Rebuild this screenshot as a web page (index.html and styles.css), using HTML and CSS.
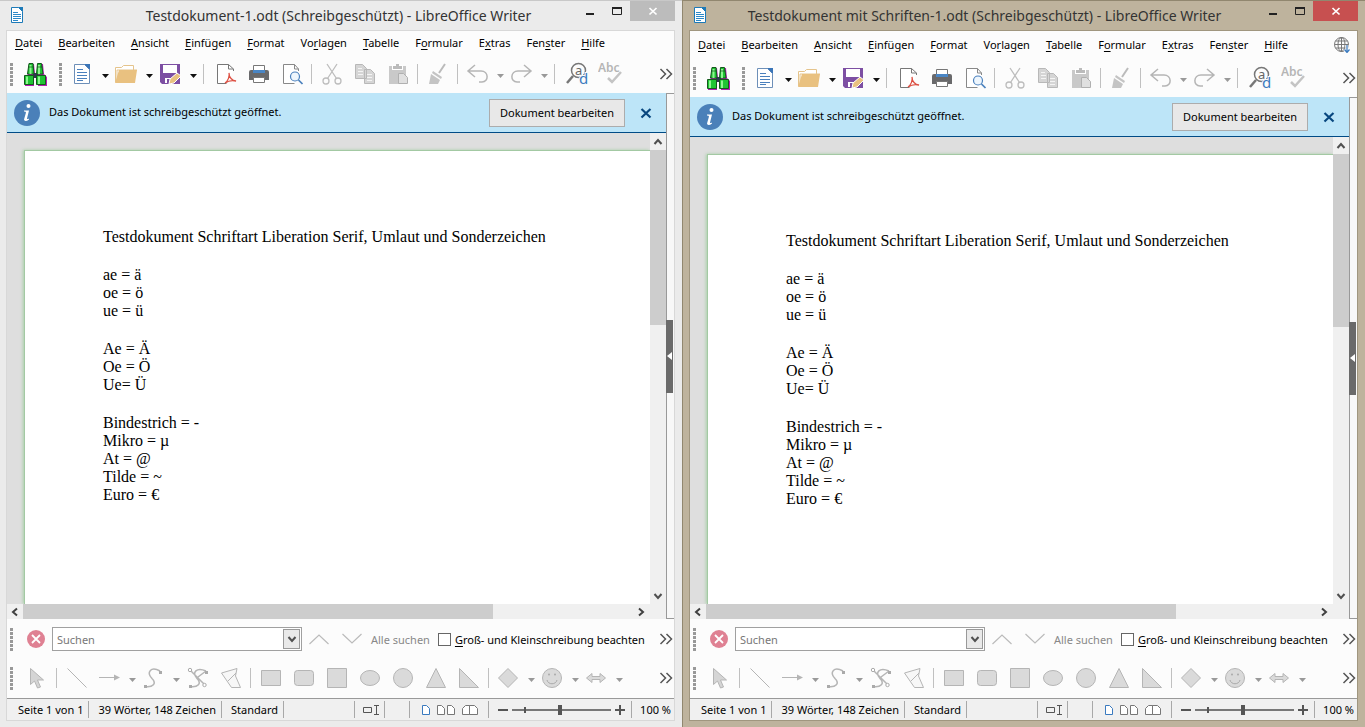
FILE: index.html
```html
<!doctype html>
<html lang="de">
<head>
<meta charset="utf-8">
<title>LibreOffice Writer</title>
<link rel="stylesheet" href="styles.css">
<script src="windows.js" defer></script>
</head>

<body>
<svg class="sprite">
	<symbol id="i-writer" viewBox="0 0 12 16"><path d="M.5.5h7l4 4v11H.5z" fill="#fff" stroke="#1d7ab8"/><path d="M7 0h5v5z" fill="#1d7ab8"/><path d="M2 5.500h5M2 7.500h8M2 9.500h8M2 11.500h8M2 13.500h5" stroke="#2b88c8"/></symbol>
	<symbol id="i-min" viewBox="0 0 12 12"><path d="M2 9h8" stroke="#222" stroke-width="2"/></symbol>
	<symbol id="i-max" viewBox="0 0 12 12"><path d="M1.500 3v6.500h9V3" fill="none" stroke="#222"/><path d="M1 3h10" stroke="#222" stroke-width="2"/></symbol>
	<symbol id="i-close" viewBox="0 0 12 12"><path d="M2.500 3l7 6.500M9.500 3l-7 6.500" stroke="#fff" stroke-width="1.700"/></symbol>
	<symbol id="i-globe" viewBox="0 0 16 16"><g fill="none" stroke="#777"><circle cx="7.500" cy="7.500" r="7"/><ellipse cx="7.500" cy="7.500" rx="3.500" ry="7"/><path d="M7.500.5v14M.5 7.500h14M1.500 4h12M1.500 11h12"/></g><path d="M13 8v7M10.500 12.500l2.500 3 2.500-3" fill="none" stroke="#fafafa" stroke-width="3"/><path d="M13 8v7M10.500 12.500l2.500 3 2.500-3" fill="none" stroke="#3a7abf" stroke-width="1.200"/></symbol>
	<symbol id="i-find" viewBox="0 0 24 24"><path d="M6 2h5l1 10h2l1-10h5l1 10 3 3v9h-9v-8h-4v8H2v-9l3-3z" fill="#b41eb4"/><path d="M10 11h5v5h-5z" fill="#335"/><path d="M4.500 12L6 1.500h4l1 10.500zM13.500 12l1-10.500h4L20 12zM1.500 13.500h9v9h-9zM13.500 13.500h9v9h-9z" fill="#1fc433" stroke="#14581c"/><path d="M7.500 3v9M4 14.500v7.500M16 3v9M16 14.500v7.500" stroke="#8df58f" stroke-width="2"/><path d="M5 5h5.500M14 5h5.500" stroke="#14581c" stroke-width=".7"/></symbol>
	<symbol id="i-new" viewBox="0 0 24 24"><path d="M4.500 2.500h10l5 5v14h-15z" fill="#fff" stroke="#6d8fb8"/><path d="M14 2h6v6z" fill="#3a75b8"/><path d="M7 7.500h6M7 10.500h10M7 13.500h10M7 16.500h10M7 18.500h6" stroke="#4a80bd"/></symbol>
	<symbol id="i-open" viewBox="0 0 24 24"><path d="M1.500 20V5.500h6l2-2h10V8M3 20V8h20" fill="#fff" stroke="#e5c48c"/><path d="M5 8h18l-2 13H1z" fill="#e9c180"/></symbol>
	<symbol id="i-save" viewBox="0 0 24 24"><path d="M2 2h20v20H4l-2-2z" fill="#7d4fa3"/><path d="M5 3h14v8H5zM7 16h8v5H7z" fill="#fff"/><path d="M9 17h3v4H9z" fill="#7d4fa3"/><path d="M11 22l1-5 7-6 4 3-7 7z" fill="#e9c180" stroke="#fff"/></symbol>
	<symbol id="i-pdf" viewBox="0 0 24 24"><path d="M19.500 9V7l-5-4.500h-11v19h9" fill="#fff" stroke="#777"/><path d="M14.500 2.500V7h5" fill="none" stroke="#777"/><path d="M11 21c3-2 5-7 4-10 0 4 3 8 7 8-4-1-8 0-11 2z" fill="none" stroke="#dd5144" stroke-width="1.300"/></symbol>
	<symbol id="i-print" viewBox="0 0 24 24"><path d="M2 10q0-2 2-2h16q2 0 2 2v8H2z" fill="#69696b"/><path d="M6.500 9V3.500h11V9" fill="#fff" stroke="#777"/><path d="M6 8h12v3H6z" fill="#4a86c5"/><path d="M6.500 15.500h11v5h-11z" fill="#fff" stroke="#777"/></symbol>
	<symbol id="i-preview" viewBox="0 0 24 24"><path d="M18.500 9V7l-4-4.500h-11v19h11M14.500 2.500V7h4" fill="#fff" stroke="#888"/><circle cx="15" cy="14.500" r="4.500" fill="#eef6fd" stroke="#4a80bd" stroke-width="1.200"/><path d="M18.500 18l4 4" stroke="#4a80bd" stroke-width="1.700"/></symbol>
	<symbol id="i-cut" viewBox="0 0 24 24"><g fill="none" stroke="#bdbdbd" stroke-width="1.300"><circle cx="6" cy="19" r="3"/><circle cx="18" cy="19" r="3"/><path d="M7.500 16.500L17 2M16.500 16.500L7 2"/></g></symbol>
	<symbol id="i-copy" viewBox="0 0 24 24"><path d="M2.500 2.500h7l4 4v10h-11zM11.500 7.500h6l4 4v10h-10z" fill="#d5d5d5" stroke="#b8b8b8"/><path d="M5 6.500h4M5 9.500h5M5 12.500h5M14 12.500h5M14 15.500h5M14 18.500h5" stroke="#f4f4f4"/></symbol>
	<symbol id="i-paste" viewBox="0 0 24 24"><path d="M3 4h17v18H3z" fill="#c9c9c9"/><path d="M6 3h11v5H6z" fill="#fff"/><path d="M7 4h3V2h3v2h3v3H7z" fill="#bbb"/><path d="M12.500 11.500h5l4 4v6h-9z" fill="#e0e0e0" stroke="#b0b0b0"/></symbol>
	<symbol id="i-brush" viewBox="0 0 24 24"><path d="M19 2l-6 9" stroke="#bbb" stroke-width="2"/><path d="M7 9l9 6-1 2-9-6zM5 12l9 6-2 4H3z" fill="#c4c4c4"/></symbol>
	<symbol id="i-undo" viewBox="0 0 24 24"><path d="M10 3L3 9l7 6M3 9h13c8 0 8 11 1 11h-3" fill="none" stroke="#b5b5b5" stroke-width="1.500"/></symbol>
	<symbol id="i-redo" viewBox="0 0 24 24"><path d="M15 3l7 6-7 6M22 9H9C1 9 1 20 8 20h3" fill="none" stroke="#b5b5b5" stroke-width="1.500"/></symbol>
	<symbol id="i-replace" viewBox="0 0 24 24"><circle cx="13.500" cy="8.500" r="7" fill="none" stroke="#777" stroke-width="1.500"/><path d="M8 14l-6 7" stroke="#777" stroke-width="2.500"/><text x="10" y="13" font-size="13" fill="#666">a</text><text x="14" y="22" font-size="15" fill="#3a7abf" stroke="#fafafa" stroke-width="2" paint-order="stroke">d</text></symbol>
	<symbol id="i-spell" viewBox="0 0 24 24"><text x="0" y="10" font-size="12" font-weight="600" fill="#b5b5b5">Abc</text><path d="M10 16l4 4 9-10" fill="none" stroke="#c4c4c4" stroke-width="2.500"/></symbol>
	<symbol id="i-more" viewBox="0 0 14 14"><path d="M1.500 2l5 5-5 5M7.500 2l5 5-5 5" fill="none" stroke="#555" stroke-width="1.500"/></symbol>
	<symbol id="i-drop" viewBox="0 0 7 4"><path d="M0 0h7L3.500 4z" fill="currentColor"/></symbol>
	<symbol id="i-info" viewBox="0 0 26 26"><circle cx="13" cy="13" r="13" fill="#4a80b9"/><circle cx="14.500" cy="6" r="2" fill="#fff"/><path d="M10 10.500h5l-2 8q0 1 2 0v1q-4 3-5 0l2-7q0-1-2-1z" fill="#fff"/></symbol>
	<symbol id="i-x" viewBox="0 0 12 12"><path d="M1.500 2l9 8.500M10.500 2l-9 8.500" stroke="#08477f" stroke-width="2.200"/></symbol>
	<symbol id="i-up" viewBox="0 0 16 16"><path d="M4.500 10L8 6l3.500 4" fill="none" stroke="#505050" stroke-width="2"/></symbol>
	<symbol id="i-down" viewBox="0 0 16 16"><path d="M4.500 6L8 10l3.500-4" fill="none" stroke="#505050" stroke-width="2"/></symbol>
	<symbol id="i-left" viewBox="0 0 16 16"><path d="M10 4.500L6 8l4 3.500" fill="none" stroke="#404040" stroke-width="2"/></symbol>
	<symbol id="i-right" viewBox="0 0 16 16"><path d="M6 4.500L10 8l-4 3.500" fill="none" stroke="#404040" stroke-width="2"/></symbol>
	<symbol id="i-stop" viewBox="0 0 18 18"><circle cx="9" cy="9" r="9" fill="#df8193"/><path d="M5 5l8 8M13 5l-8 8" stroke="#fff" stroke-width="1.800"/></symbol>
	<symbol id="i-prev" viewBox="0 0 24 24"><path d="M2.500 17l9.500-9 9.500 9" fill="none" stroke="#bbb" stroke-width="1.200"/></symbol>
	<symbol id="i-next" viewBox="0 0 24 24"><path d="M2.500 7l9.500 9 9.500-9" fill="none" stroke="#bbb" stroke-width="1.200"/></symbol>
	<symbol id="i-pointer" viewBox="0 0 24 24"><path d="M5.500 2.500v16l4-3.500 3 7 3-1-3-7h6z" fill="#d5d5d5" stroke="#b5b5b5"/></symbol>
	<symbol id="i-line" viewBox="0 0 24 24"><path d="M2.500 2.500l19 19" stroke="#b5b5b5"/></symbol>
	<symbol id="i-arrow" viewBox="0 0 24 24"><path d="M2 11.500h17" stroke="#b5b5b5"/><path d="M17 8.500l6 3-6 3z" fill="#b5b5b5"/></symbol>
	<symbol id="i-curve" viewBox="0 0 24 24"><path d="M4 20.500c8 1 12-3 7-8C5 6 10 0 19 5" fill="none" stroke="#b5b5b5" stroke-width="1.500"/><path d="M3 19h3v3H3zM18 5h3v3h-3z" fill="#aaa"/></symbol>
	<symbol id="i-points" viewBox="0 0 24 24"><path d="M4 20.500c8 1 12-3 7-8C5 6 11 1 20 5M5 5l13 13M12 11l8-6" fill="none" stroke="#b5b5b5" stroke-width="1.500"/><circle cx="4" cy="4" r="1.700" fill="#fff" stroke="#aaa"/><circle cx="18.500" cy="19" r="1.700" fill="#fff" stroke="#aaa"/><path d="M3 19h3v3H3zM19 5h3v3h-3z" fill="#aaa"/></symbol>
	<symbol id="i-polygon" viewBox="0 0 24 24"><path d="M2.500 7L18 2.500 16.500 10l5 11.500h-9z" fill="#f7f7f7" stroke="#b5b5b5"/><path d="M9 15l8-8" stroke="#b5b5b5"/></symbol>
	<symbol id="i-rect" viewBox="0 0 24 24"><path d="M2.500 4.500h19v15h-19z" fill="#dadada" stroke="#b5b5b5"/></symbol>
	<symbol id="i-round" viewBox="0 0 24 24"><rect x="2.500" y="4.500" width="19" height="15" rx="3" fill="#dadada" stroke="#b5b5b5"/></symbol>
	<symbol id="i-square" viewBox="0 0 24 24"><path d="M2.500 2.500h19v19h-19z" fill="#dadada" stroke="#b5b5b5"/></symbol>
	<symbol id="i-ellipse" viewBox="0 0 24 24"><ellipse cx="12" cy="12" rx="9.500" ry="7.500" fill="#dadada" stroke="#b5b5b5"/></symbol>
	<symbol id="i-circle" viewBox="0 0 24 24"><circle cx="12" cy="12" r="9.500" fill="#dadada" stroke="#b5b5b5"/></symbol>
	<symbol id="i-triangle" viewBox="0 0 24 24"><path d="M12 2.500l9.500 19h-19z" fill="#dadada" stroke="#b5b5b5"/></symbol>
	<symbol id="i-rtriangle" viewBox="0 0 24 24"><path d="M2.500 2.500l19 19h-19z" fill="#dadada" stroke="#b5b5b5"/></symbol>
	<symbol id="i-diamond" viewBox="0 0 24 24"><path d="M12 2.500l9.500 9.500-9.500 9.500L2.500 12z" fill="#dadada" stroke="#b5b5b5"/></symbol>
	<symbol id="i-smiley" viewBox="0 0 24 24"><circle cx="12" cy="12" r="9.500" fill="#dadada" stroke="#b5b5b5"/><path d="M7 14c1 5 9 5 10 0" fill="none" stroke="#aaa"/><circle cx="9" cy="8.500" r="1" fill="#aaa"/><circle cx="15" cy="8.500" r="1" fill="#aaa"/></symbol>
	<symbol id="i-double" viewBox="0 0 24 24"><path d="M2.500 12L8 7.500v3h8v-3l5.500 4.500-5.500 4.500v-3H8v3z" fill="#dadada" stroke="#b5b5b5"/></symbol>
	<symbol id="i-select" viewBox="0 0 18 12"><path d="M1.500 3.500h8v5h-8zM12 1.500h5M12 10.500h5M14.500 1.500v9" fill="none" stroke="#555"/></symbol>
	<symbol id="i-page1" viewBox="0 0 10 12"><path d="M1.500 1.500h4l3 3v6h-7z" fill="#fff" stroke="#3a7abf"/></symbol>
	<symbol id="i-page2" viewBox="0 0 20 12"><path d="M1.500 1.500h4l3 3v6h-7zM11.500 1.500h4l3 3v6h-7z" fill="#fff" stroke="#777"/></symbol>
	<symbol id="i-book" viewBox="0 0 18 12"><path d="M1.500 10.500v-6l3-3h4v9zM8.500 10.500v-9h5l3 3v6z" fill="#fff" stroke="#777"/></symbol>
</svg>

<section class="window">
	<header class="titlebar">
		<svg class="app"><use href="#i-writer"/></svg>
		<h1 class="title">Testdokument-1.odt (Schreibgeschützt) - LibreOffice Writer</h1>
		<button class="win" aria-label="Minimieren"><svg><use href="#i-min"/></svg></button>
		<button class="win" aria-label="Maximieren"><svg><use href="#i-max"/></svg></button>
		<button class="win close" aria-label="Schließen"><svg><use href="#i-close"/></svg></button>
	</header>
	<div class="frame"></div>
</section>

<section class="window active">
	<header class="titlebar">
		<svg class="app"><use href="#i-writer"/></svg>
		<h1 class="title">Testdokument mit Schriften-1.odt (Schreibgeschützt) - LibreOffice Writer</h1>
		<button class="win" aria-label="Minimieren"><svg><use href="#i-min"/></svg></button>
		<button class="win" aria-label="Maximieren"><svg><use href="#i-max"/></svg></button>
		<button class="win close" aria-label="Schließen"><svg><use href="#i-close"/></svg></button>
	</header>
	<div class="frame"></div>
</section>

<template id="writer">
	<nav class="menubar">
		<button><u>D</u>atei</button>
		<button><u>B</u>earbeiten</button>
		<button><u>A</u>nsicht</button>
		<button><u>E</u>infügen</button>
		<button><u>F</u>ormat</button>
		<button>Vo<u>r</u>lagen</button>
		<button><u>T</u>abelle</button>
		<button>F<u>o</u>rmular</button>
		<button>E<u>x</u>tras</button>
		<button>Fen<u>s</u>ter</button>
		<button><u>H</u>ilfe</button>
		<button class="update" aria-label="Aktualisierung"><svg><use href="#i-globe"/></svg></button>
	</nav>
	<div class="toolbar" data-tools="grip find grip new* open* save* | pdf print preview | cut copy paste | brush | undo*- redo*- | replace spell more"></div>
	<div class="main">
		<div class="view">
			<div class="infobar">
				<svg class="info"><use href="#i-info"/></svg>
				<p class="message">Das Dokument ist schreibgeschützt geöffnet.</p>
				<button class="edit">Dokument bearbeiten</button>
				<button class="dismiss" aria-label="Schließen"><svg><use href="#i-x"/></svg></button>
			</div>
			<div class="doc">
				<div class="desk">
					<article class="page">
						<p>Testdokument Schriftart Liberation Serif, Umlaut und Sonderzeichen</p>
						<p>ae = ä<br>oe = ö<br>ue = ü</p>
						<p>Ae = Ä<br>Oe = Ö<br>Ue= Ü</p>
						<p>Bindestrich = -<br>Mikro = µ<br>At = @<br>Tilde = ~<br>Euro = €</p>
					</article>
				</div>
				<div class="vscroll">
					<button aria-label="Nach oben"><svg><use href="#i-up"/></svg></button>
					<div class="track"><div class="thumb"></div></div>
					<button aria-label="Nach unten"><svg><use href="#i-down"/></svg></button>
				</div>
			</div>
			<div class="hscroll">
				<button aria-label="Nach links"><svg><use href="#i-left"/></svg></button>
				<div class="track"><div class="thumb"></div></div>
				<button aria-label="Nach rechts"><svg><use href="#i-right"/></svg></button>
			</div>
		</div>
		<aside class="sidebar"><button class="handle" aria-label="Seitenleiste"></button></aside>
	</div>
	<div class="findbar">
		<span class="grip"></span>
		<button class="stop" aria-label="Suchleiste schließen"><svg><use href="#i-stop"/></svg></button>
		<div class="combo">
			<input type="text" placeholder="Suchen" aria-label="Suchen">
			<button aria-label="Verlauf"><svg><use href="#i-down"/></svg></button>
		</div>
		<button class="tool" aria-label="Rückwärts suchen"><svg><use href="#i-prev"/></svg></button>
		<button class="tool" aria-label="Vorwärts suchen"><svg><use href="#i-next"/></svg></button>
		<button class="all" disabled>Alle suchen</button>
		<label class="check"><input type="checkbox"><span><u>G</u>roß- und Kleinschreibung beachten</span></label>
		<button class="more" aria-label="Mehr"><svg><use href="#i-more"/></svg></button>
	</div>
	<div class="toolbar shapes" data-tools="grip pointer | line arrow*- curve*- points polygon | rect round square ellipse circle triangle rtriangle | diamond*- smiley*- double*- more"></div>
	<footer class="status">
		<span>Seite 1 von 1</span>
		<span>39 Wörter, 148 Zeichen</span>
		<span>Standard</span>
		<span class="fill"></span>
		<span class="mode"><svg><use href="#i-select"/></svg></span>
		<span class="blank"></span>
		<span class="layouts">
			<svg class="one"><use href="#i-page1"/></svg>
			<svg class="two"><use href="#i-page2"/></svg>
			<svg class="book"><use href="#i-book"/></svg>
		</span>
		<span class="zoom">
			<button class="minus" aria-label="Verkleinern"></button>
			<input type="range" min="0" max="100" value="48" aria-label="Maßstab">
			<button class="minus plus" aria-label="Vergrößern"></button>
		</span>
		<span class="percent">100 %</span>
	</footer>
</template>
</body>
</html>
```

FILE: styles.css
```css
*{margin:0; padding:0; box-sizing:border-box;}
body{display:flex; gap:1px; height:100vh; overflow:hidden; background:#91876f; font:11px "Noto Sans","Open Sans",sans-serif; color:#000;}
button,input{font:inherit; color:inherit; background:none; border:0;}
svg{display:block; flex:none;}
.sprite{display:none;}

/* window */
.window{flex:1; min-width:0; display:flex; flex-direction:column; padding:0 7px 6px 6px; background:#ebebeb; border-top:1px solid #c8c8c8;}
.titlebar{display:flex; height:29px; flex:none;}
.app{width:12px; height:16px; margin:6px 4px 0 5px;}
.title{flex:1; padding-left:74px; font-size:14px; font-weight:400; line-height:29px; text-align:center; white-space:nowrap; color:#333;}
.win{width:27px; height:20px; display:flex; align-items:center; justify-content:center;}
.win svg{width:12px; height:12px;}
.close{width:45px; background:#bcbcbc;}
.frame{flex:1; min-height:0; display:flex; flex-direction:column; background:#fcfcfc; border:1px solid #d8d8d8;}
.active{background:#beb39d; border-top-color:#91876f;}
.active .title{padding-left:0;}
.active .close{background:#c75050;}
.active .frame{border-color:#a0967f;}

/* menu */
.menubar{display:flex; align-items:center; min-height:24px; padding:0 0 2px 8px; gap:16px; white-space:nowrap;}
.update{display:none; margin-left:auto; padding:6px 7px 4px 0;}
.update svg{width:16px; height:16px;}
.active .update{display:block;}
u{text-underline-offset:2px;}

/* toolbars */
.toolbar{display:flex; align-items:center; height:38px; flex:none;}
.shapes{height:39px; padding-bottom:1px;}
.grip{width:3px; height:23px; margin:0 5px 0 3px; background:repeating-linear-gradient(#999 0 3px,transparent 3px 4px);}
.tool + .grip{margin:0 4px 0 8px;}
.shapes .grip{margin-right:7px;}
.tool{width:33px; height:30px; flex:none; display:flex; align-items:center; justify-content:center;}
.tool svg{width:24px; height:24px;}
.tool.split{width:31px;}
.drop{width:13px; height:30px; padding:4px 1px 0 5px; color:#111;}
.drop svg{width:7px; height:4px;}
.drop.off{color:#999;}
.sep{width:1px; height:20px; margin:0 3px; background:#c0c0c0;}
.drop + .sep{margin:0 5px;}
.more{margin-left:auto; padding-right:1px;}
.more svg{width:14px; height:14px;}

/* document */
.main{flex:1; min-height:0; display:flex;}
.view{flex:1; min-width:0; display:flex; flex-direction:column;}
.infobar{display:flex; align-items:center; height:40px; flex:none; padding:0 14px 0 7px; background:#bde5f8; border-bottom:1px solid #004b86;}
.info{width:26px; height:26px; margin-right:9px;}
.message{flex:1; padding-bottom:2px;}
.edit{height:28px; padding:0 10px; background:#e8e8e8; border:1px solid #acacac;}
.dismiss{margin-left:15px;}
.dismiss svg{width:12px; height:12px;}
.doc{flex:1; min-height:0; display:flex;}
.desk{flex:1; display:flex; padding:17px 0 0 17px; background:#dedede; overflow:hidden;}
.page{flex:1; padding:77px 0 0 78px; background:#fff; border:1px solid #a3c9a3; border-width:1px 0 0 1px; box-shadow:-1px 0 3px #a8cfa8; font:16px/18px "Liberation Serif",serif;}
.page p{margin-bottom:20px;}
.vscroll{width:16px; display:flex; flex-direction:column; background:#f0f0f0;}
.vscroll button{height:17px;}
.vscroll svg,.hscroll svg{width:16px; height:16px;}
.track{flex:1;}
.thumb{background:#cdcdcd;}
.vscroll .thumb{height:40%;}
.hscroll{display:flex; align-items:stretch; height:15px; padding-right:17px; background:#f0f0f0;}
.hscroll button{width:16px;}
.hscroll .thumb{width:77%; height:100%;}
.sidebar{width:8px; display:flex; align-items:center; background:#f8f8f8; border:1px solid #999; border-right:0;}
.handle{width:7px; height:73px; flex:none; margin-left:-1px; background:#6a6a6a; display:flex; align-items:center; justify-content:center;}
.handle:before{content:""; border:4px solid transparent; border-right:5px solid #fff; border-left:0;}

/* find */
.findbar{display:flex; align-items:center; height:40px; flex:none; white-space:nowrap;}
.stop{margin:0 7px 0 9px;}
.stop svg{width:18px; height:18px;}
.combo{flex:0 1 250px; min-width:0; height:24px; display:flex; padding:1px; background:#fff; border:1px solid #a0a0a0;}
.combo input{flex:1; min-width:0; padding-left:3px; outline:0;}
.combo input::placeholder{color:#777; opacity:1;}
.combo button{width:17px; display:flex; align-items:center; justify-content:center; background:#e9e9e9; border:1px solid #999;}
.combo svg{width:16px; height:16px;}
.all{margin:0 8px 0 3px; color:#888;}
.check{display:flex; align-items:center; gap:4px;}
.check input{appearance:none; width:13px; height:13px; background:#fff; border:1px solid #666;}

/* status */
.status{display:flex; align-items:center; height:22px; flex:none; background:#f0f0f0; border-top:1px solid #999; white-space:nowrap;}
.status > span{display:flex; align-items:center; height:17px; padding:0 5px 0 9px; border-right:1px solid #a8a8a8;}
.status > span:first-child{padding-left:11px;}
.status > .fill{flex:1;}
.mode svg{width:18px; height:12px;}
.status > .mode{padding:0 4px 0 7px;}
.status > .blank{width:25px; padding:0;}
.status > .layouts{gap:5px; padding:0 9px 0 11px;}
.one{width:10px; height:12px;}
.two{width:20px; height:12px;}
.book{width:18px; height:12px;}
.status > .zoom{padding:0 6px 0 9px; gap:4px;}
.minus{width:10px; height:10px; background:linear-gradient(#555,#555) center/10px 2px no-repeat;}
.plus{background:linear-gradient(#555,#555) center/10px 2px no-repeat,linear-gradient(#555,#555) center/2px 10px no-repeat;}
.zoom input{appearance:none; width:99px; height:12px; background:linear-gradient(#555,#555) 12px 50%/2px 6px no-repeat,linear-gradient(#777,#777) center/100% 2px no-repeat;}
.zoom input::-webkit-slider-thumb{appearance:none; width:4px; height:10px; background:#555;}
.status > .percent{padding:0 3px 0 8px; border:0;}
```

FILE: windows.js
```javascript
// "name*" has a drop-down arrow, "name*-" a greyed one, "|" is a separator
function buildBar(bar){
	var html = '';
	bar.dataset.tools.split(' ').forEach(function(item){
		var name = item.replace(/[*-]/g,'');
		var split = item.indexOf('*') > 0;
		if(item == '|'){
			html += '<span class="sep"></span>';
		}else if(item == 'grip'){
			html += '<span class="grip"></span>';
		}else{
			var cls = item == 'more' ? 'more' : 'tool' + (split ? ' split' : '');
			html += '<button class="'+cls+'" aria-label="'+name+'"><svg><use href="#i-'+name+'"/></svg></button>';
			if(split){
				html += '<button class="drop'+(item.indexOf('-') > 0 ? ' off' : '')+'" aria-label="'+name+' Optionen"><svg><use href="#i-drop"/></svg></button>';
			}
		}
	});
	bar.innerHTML = html;
}

document.querySelectorAll('.frame').forEach(function(frame){
	frame.appendChild(document.getElementById('writer').content.cloneNode(true));
	frame.querySelectorAll('[data-tools]').forEach(buildBar);
});
```
